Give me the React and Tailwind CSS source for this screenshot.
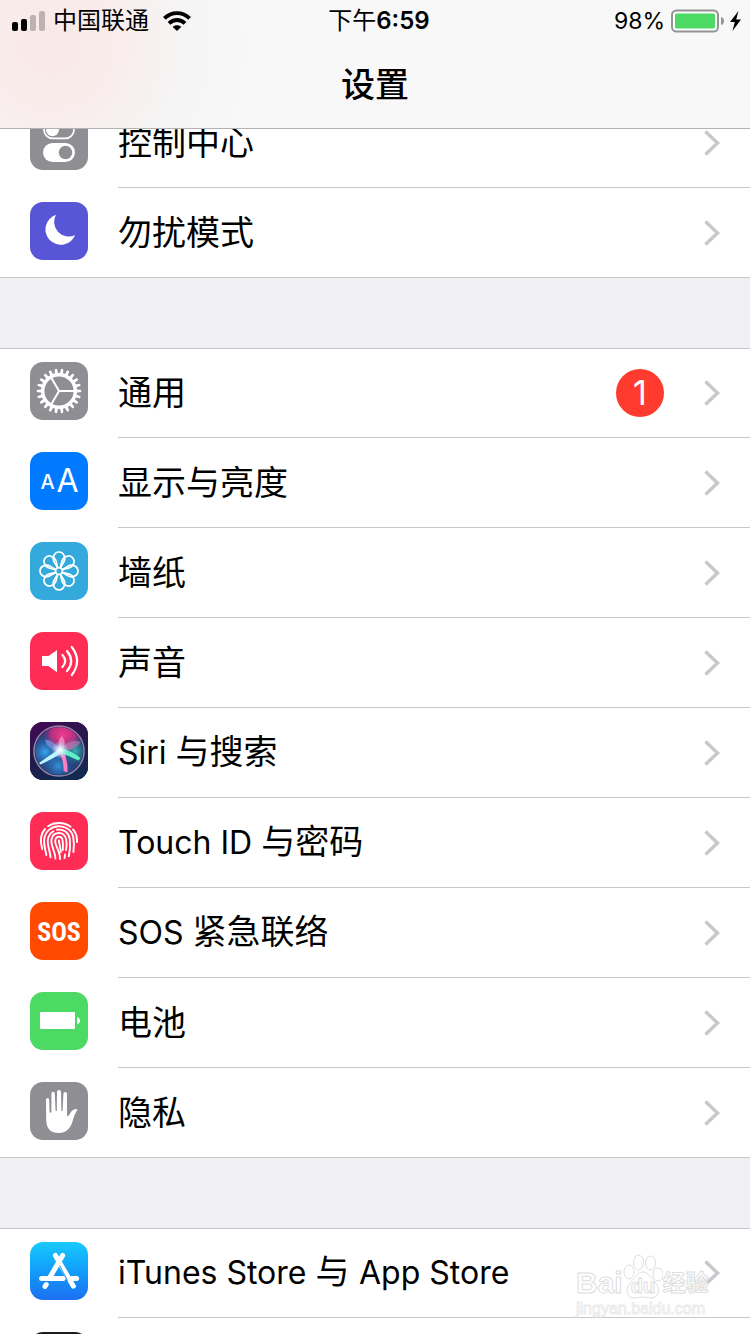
import React from 'react';

const LATIN_CJK = "font-['Inter','Noto_Sans_CJK_SC',sans-serif]";

function Tile({ className, children }) {
  return (
    <svg viewBox="0 0 58 58" className={`block size-[58px] rounded-[13px] ${className}`} aria-hidden="true">
      {children}
    </svg>
  );
}

const around = (count) => Array.from({ length: count }, (_, i) => (i * 360) / count);

function ControlCenterIcon() {
  return (
    <Tile className="bg-[#8e8e93]">
      <rect x="14" y="9" width="30" height="17.4" rx="8.7" fill="none" stroke="#fff" strokeWidth="1.8" />
      <circle cx="22.5" cy="17.7" r="6.5" fill="#fff" />
      <rect x="13" y="31" width="32" height="19" rx="9.5" fill="#fff" />
      <circle cx="35.5" cy="40.5" r="6.7" fill="#8e8e93" />
    </Tile>
  );
}

function MoonIcon() {
  return (
    <Tile className="bg-[#5856d6]">
      <path d="M26 12.800A15.400 15.400 0 1 0 45.200 33A14.600 14.600 0 0 1 26 12.800Z" fill="#fff" />
    </Tile>
  );
}

function GearIcon() {
  return (
    <Tile className="bg-[#8e8e93]">
      <g transform="translate(29 29)" stroke="#fff" fill="none">
        <circle r="16.3" strokeWidth="3.4" />
        {around(22).map((a) => (
          <path key={a} d="M17 -1.700L22.200 -1.100V1.100L17 1.700Z" fill="#fff" stroke="none" transform={`rotate(${a})`} />
        ))}
        {around(3).map((a) => (
          <path key={a} d="M0 0H16" strokeWidth="2" transform={`rotate(${a})`} />
        ))}
      </g>
    </Tile>
  );
}

function DisplayIcon() {
  return (
    <Tile className="bg-[#007aff]">
      <g fill="#fff" className="font-['Inter',sans-serif]" textAnchor="middle">
        <text x="17.5" y="37" className="text-[20px] font-medium">A</text>
        <text x="37.5" y="40" className="text-[32px] font-normal">A</text>
      </g>
    </Tile>
  );
}

function WallpaperIcon() {
  return (
    <Tile className="bg-[#34aadc]">
      <g transform="translate(29 29)" stroke="#fff" strokeWidth="1.7" fill="none">
        <circle r="3.4" />
        {around(8).map((a) => (
          <path
            key={a}
            d="M-1.3 -3.2L-4.6 -8.600C-7.400 -13 -4.800 -19 0 -19C4.800 -19 7.400 -13 4.600 -8.600L1.300 -3.200"
            transform={`rotate(${a})`}
          />
        ))}
      </g>
    </Tile>
  );
}

function SoundIcon() {
  return (
    <Tile className="bg-[#ff2d55]">
      <path d="M12 24H18.5L27 18V40.3L18.5 34H12Z" fill="#fff" />
      <g fill="none" stroke="#fff" strokeWidth="2.200" strokeLinecap="round">
        <path d="M32.4 23Q38 29 32.4 35" />
        <path d="M37 19Q45.4 29 37 39" />
        <path d="M41.8 15Q52.4 29 41.8 43" />
      </g>
    </Tile>
  );
}

function SiriIcon() {
  return (
    <Tile className="bg-[#1b1340]">
      <defs>
        <linearGradient id="siri-bg" x1="0.2" y1="0" x2="0.6" y2="1">
          <stop offset="0" stopColor="#420a55" />
          <stop offset="0.5" stopColor="#211b4a" />
          <stop offset="1" stopColor="#122a50" />
        </linearGradient>
        <radialGradient id="siri-pink">
          <stop offset="0" stopColor="#f03a90" />
          <stop offset="0.6" stopColor="#d92b7e" stopOpacity="0.8" />
          <stop offset="1" stopColor="#a02080" stopOpacity="0" />
        </radialGradient>
        <radialGradient id="siri-blue">
          <stop offset="0" stopColor="#38a8f0" />
          <stop offset="1" stopColor="#1f62b8" stopOpacity="0" />
        </radialGradient>
        <radialGradient id="siri-teal">
          <stop offset="0" stopColor="#3be0c8" />
          <stop offset="1" stopColor="#158098" stopOpacity="0" />
        </radialGradient>
        <radialGradient id="siri-glow">
          <stop offset="0" stopColor="#fff" />
          <stop offset="0.3" stopColor="#e4f6ff" stopOpacity="0.85" />
          <stop offset="1" stopColor="#9fd8ff" stopOpacity="0" />
        </radialGradient>
        <clipPath id="siri-disc">
          <circle cx="29" cy="29" r="24" />
        </clipPath>
      </defs>
      <rect width="58" height="58" fill="url(#siri-bg)" />
      <g clipPath="url(#siri-disc)">
        <circle cx="29" cy="29" r="24" fill="#2a4078" />
        <circle cx="33" cy="13" r="20" fill="url(#siri-pink)" />
        <circle cx="15" cy="30" r="17" fill="url(#siri-blue)" />
        <circle cx="45" cy="29" r="15" fill="url(#siri-teal)" opacity="0.7" />
        <circle cx="28" cy="44" r="16" fill="url(#siri-blue)" opacity="0.8" />
        <path d="M30 27Q20 16 15 18Q16 26 29 30Z" fill="#8fa9f0" opacity="0.55" />
        <path d="M29 28Q27 17 32 14Q38 22 31 29Z" fill="#ffb3dc" opacity="0.6" />
        <path d="M30 27Q40 16 51 20Q45 28 31 30Z" fill="#d880c0" opacity="0.5" />
        <path d="M30 26.500Q20 33 9 41L10.500 42.500Q24 36 32 31Z" fill="#bdf8ff" />
        <path d="M27 28Q34 36 33.500 49L37.500 50.500Q38 38 33 27Z" fill="#ff7fc4" />
        <path d="M31 26Q42 29 50.500 36L48.500 38.500Q40 34 30 31Z" fill="#5ff0c4" />
        <circle cx="30" cy="28" r="9" fill="url(#siri-glow)" />
      </g>
      <circle cx="29" cy="29" r="25" fill="none" stroke="#a796b8" strokeWidth="1.5" opacity="0.85" />
    </Tile>
  );
}

function FingerprintIcon() {
  return (
    <Tile className="bg-[#ff2d55]">
      <g fill="none" stroke="#fff" strokeWidth="1.9" strokeLinecap="round">
        <path d="M18 14.2C24.5 9.8 34 9.8 40.6 14.8" />
        <path d="M15 17C10.6 21.6 10 29 12.2 37" />
        <path d="M43 17.4C46 20.6 47.2 25 47 30" />
        <path d="M16.4 43C14.8 36 13.6 32 14.2 27C16.6 10.4 40 10.4 43.2 25C44.2 30 44.2 35 43.4 40" />
        <path d="M20.600 45.400C20 39 17.200 33 17.800 28C18.400 23.600 20.600 20.800 23.400 19.200" />
        <path d="M27 17.8C34 16.8 39 21 39.8 27C40.4 33 40 39 38.8 44.4" />
        <path d="M25.400 46.600C25.200 39 20.800 34 21.400 28C22.800 18.6 34.6 18.8 36.2 27.4C36.8 31 36.6 35 36 38" />
        <path d="M35 42.400L34.600 46" />
        <path d="M30 47C30.400 39 24.800 34 25.200 28.600C25.800 23.400 32 23.6 32.6 28.4C33.2 32 33 35 32.8 38" />
        <path d="M28.900 28.400C28.900 31 30.600 35 30.800 40" />
      </g>
    </Tile>
  );
}

function SosIcon() {
  return (
    <Tile className="bg-[#ff4a00]">
      <text
        x="29"
        y="38.500"
        textAnchor="middle"
        fill="#fff"
        className="font-['Liberation_Sans_Narrow','Roboto_Condensed',Roboto,sans-serif] text-[26px] font-bold"
      >
        SOS
      </text>
    </Tile>
  );
}

function BatteryIcon() {
  return (
    <Tile className="bg-[#4cd964]">
      <rect x="10" y="20" width="35" height="17" rx="1" fill="#fff" />
      <path d="M47 25C51 26 51 31.400 47 32.400Z" fill="#fff" />
    </Tile>
  );
}

function HandIcon() {
  return (
    <Tile className="bg-[#8e8e93]">
      <path
        fill="#fff"
        d="M16 18Q16 16 17.600 16Q19.200 16 19.200 18L19.600 30.500H21.400V11.800Q21.400 9.800 23 9.800Q24.800 9.800 24.800 11.800L25.600 29H26.800L27 10Q27 8 29 8Q31 8 31 10L31.400 29H32.600L33.400 12Q33.400 10 35.200 10Q37 10 37 12V34Q38.600 34.400 40 31.400Q42.400 27 47 27Q47.800 27.400 47 28.600Q44.600 32 43 38Q39.600 51 28.600 51Q16.600 51 16.200 38Z"
      />
    </Tile>
  );
}

function AppStoreIcon() {
  return (
    <Tile className="bg-linear-to-b from-[#1bc9fd] to-[#1d6ef2]">
      <g stroke="#fff" strokeWidth="5" strokeLinecap="round">
        <path d="M11.600 36.400H33" />
        <path d="M42 36.400H46.600" />
        <path d="M25.400 13.400L43.400 44.200" />
        <path d="M32.600 13.400L20.400 34.400" />
        <path d="M16.200 42.600L15 44.400" />
      </g>
      <path d="M29.600 23.400L37.600 38.800" stroke="#1f9df8" strokeWidth="1" />
    </Tile>
  );
}

function WalletIcon() {
  return <Tile className="bg-[#1c1c1e]" />;
}

function Chevron() {
  return (
    <svg viewBox="0 0 16 26" className="h-[26px] w-4 shrink-0" aria-hidden="true">
      <path d="M1.500 1.500L13.500 13L1.500 24.500" fill="none" stroke="#c7c7cc" strokeWidth="3.400" />
    </svg>
  );
}

function Label({ text }) {
  return text.split(/([A-Za-z][A-Za-z ]*)/).map((part, i) =>
    /[A-Za-z]/.test(part) ? (
      <span key={i} className="text-[32px] whitespace-pre">
        {part}
      </span>
    ) : (
      part
    ),
  );
}

function Row({ icon: Icon, label, badge, last }) {
  return (
    <li>
      <a href="#" className="flex h-[90px] items-stretch pl-[30px]">
        <span className="flex items-center pb-1">
          <Icon />
        </span>
        <span
          className={`flex min-w-0 flex-1 items-center border-b border-[#c8c7cc] pr-[30px] ${last ? '-ml-[88px] pl-[118px]' : 'ml-[30px]'}`}
        >
          <span className="flex-1 truncate text-[34px] leading-[48px] text-black">
            <Label text={label} />
          </span>
          {badge && (
            <span className="mr-10 flex size-12 items-center justify-center rounded-full bg-[#ff3b30] text-[34px] leading-[48px] text-white">
              {badge}
            </span>
          )}
          <Chevron />
        </span>
      </a>
    </li>
  );
}

function Group({ rows, closed = true }) {
  return (
    <ul className="bg-white shadow-[inset_0_1px_0_#c8c7cc]">
      {rows.map((row, i) => (
        <Row key={i} {...row} last={closed && i === rows.length - 1} />
      ))}
    </ul>
  );
}

const focusRows = [
  { icon: ControlCenterIcon, label: '控制中心' },
  { icon: MoonIcon, label: '勿扰模式' },
];

const deviceRows = [
  { icon: GearIcon, label: '通用', badge: '1' },
  { icon: DisplayIcon, label: '显示与亮度' },
  { icon: WallpaperIcon, label: '墙纸' },
  { icon: SoundIcon, label: '声音' },
  { icon: SiriIcon, label: 'Siri 与搜索' },
  { icon: FingerprintIcon, label: 'Touch ID 与密码' },
  { icon: SosIcon, label: 'SOS 紧急联络' },
  { icon: BatteryIcon, label: '电池' },
  { icon: HandIcon, label: '隐私' },
];

const storeRows = [
  { icon: AppStoreIcon, label: 'iTunes Store 与 App Store' },
  { icon: WalletIcon, label: '' },
];

function StatusBar() {
  return (
    <div className="grid h-[42px] grid-cols-[1fr_auto_1fr] items-center px-2 text-[24px] leading-[42px] text-black">
      <div className="flex items-center gap-2 pl-1">
        <svg viewBox="0 0 33 20" className="h-5 w-[33px]" aria-hidden="true">
          <rect x="0" y="11" width="6" height="9" rx="2" />
          <rect x="9" y="8" width="6" height="12" rx="2" />
          <rect x="18" y="4" width="6" height="16" rx="2" fill="#bdb2b2" />
          <rect x="27" y="0" width="6" height="20" rx="2" fill="#bdb2b2" />
        </svg>
        <span>中国联通</span>
        <svg viewBox="0 0 28 20" className="ml-1.5 h-5 w-7" aria-hidden="true">
          <g fill="none" stroke="#000" strokeWidth="3.900">
            <path d="M1.400 7.400C8.400 0.400 19.600 0.400 26.600 7.400" />
            <path d="M6 12.400C10.600 7.900 17.400 7.900 22 12.400" />
          </g>
          <path d="M14 20L9.600 15.800C12 13.600 16 13.600 18.400 15.800Z" />
        </svg>
      </div>
      <span className="pl-2 font-semibold">
        <span className="font-normal">下午</span>6:59
      </span>
      <div className="flex items-center justify-end gap-[6px]">
        <span className="text-[23px]">98%</span>
        <svg viewBox="0 0 71 24" className="h-6 w-[71px]" aria-hidden="true">
          <rect x="1" y="1.500" width="46" height="21" rx="4.500" fill="#fff" stroke="#949494" strokeWidth="2" />
          <rect x="4" y="4.500" width="40" height="15" rx="1.500" fill="#4cd964" />
          <path d="M50 8C54 9 54 15 50 16Z" fill="#949494" />
          <path d="M67.500 2L59 13H63.800L61.500 22L70 10.600H65.200Z" />
        </svg>
      </div>
    </div>
  );
}

function Watermark() {
  return (
    <div className="pointer-events-none absolute right-10 bottom-4 flex w-[134px] flex-col text-white" aria-hidden="true">
      <div className="flex items-end [-webkit-text-stroke:1px_#dedede]">
        <span className="font-['Liberation_Sans',sans-serif] text-[30px] leading-[34px] font-bold">Bai</span>
        <svg viewBox="0 0 40 46" className="h-[46px] w-10 shrink-0">
          <g fill="#fff" stroke="#dedede" strokeWidth="1">
            <ellipse cx="6" cy="18" rx="5" ry="7" />
            <ellipse cx="15.500" cy="8.500" rx="5" ry="7.500" />
            <ellipse cx="27.500" cy="9" rx="5" ry="7" />
            <ellipse cx="35" cy="20.500" rx="5" ry="6.500" />
            <path d="M20 18C25 18 28 24 32 28C37 33 37 43 29 44C25 44 23 43 20 43C17 43 14 44 10 44C3 43 2 34 8 28C12 24 15 18 20 18Z" />
            <text x="20" y="39" textAnchor="middle" className="font-['Liberation_Sans',sans-serif] text-[20px] font-bold">du</text>
          </g>
        </svg>
        <span className="text-[23px] leading-[34px] font-bold whitespace-nowrap">经验</span>
      </div>
      <span className="font-['Liberation_Sans',sans-serif] text-[16px] leading-[18px] [-webkit-text-stroke:1px_#ebebeb]">
        jingyan.baidu.com
      </span>
    </div>
  );
}

export default function App() {
  return (
    <div className={`relative h-screen overflow-hidden bg-[#efeff4] ${LATIN_CJK}`}>
      <header className="absolute inset-x-0 top-0 z-10 border-b border-[#b2b2b2] bg-[#f8f8f8] bg-[radial-gradient(circle_at_50px_45px,#f9e8e7_0,#f8eeed_80px,#f5f5f5_140px,#f8f8f8_210px)]">
        <StatusBar />
        <h1 className="h-[86px] text-center text-[34px] leading-[86px] font-medium text-black">设置</h1>
      </header>
      <main className="flex flex-col gap-[70px] pt-[98px]">
        <Group rows={focusRows} />
        <Group rows={deviceRows} />
        <Group rows={storeRows} closed={false} />
      </main>
      <Watermark />
    </div>
  );
}
